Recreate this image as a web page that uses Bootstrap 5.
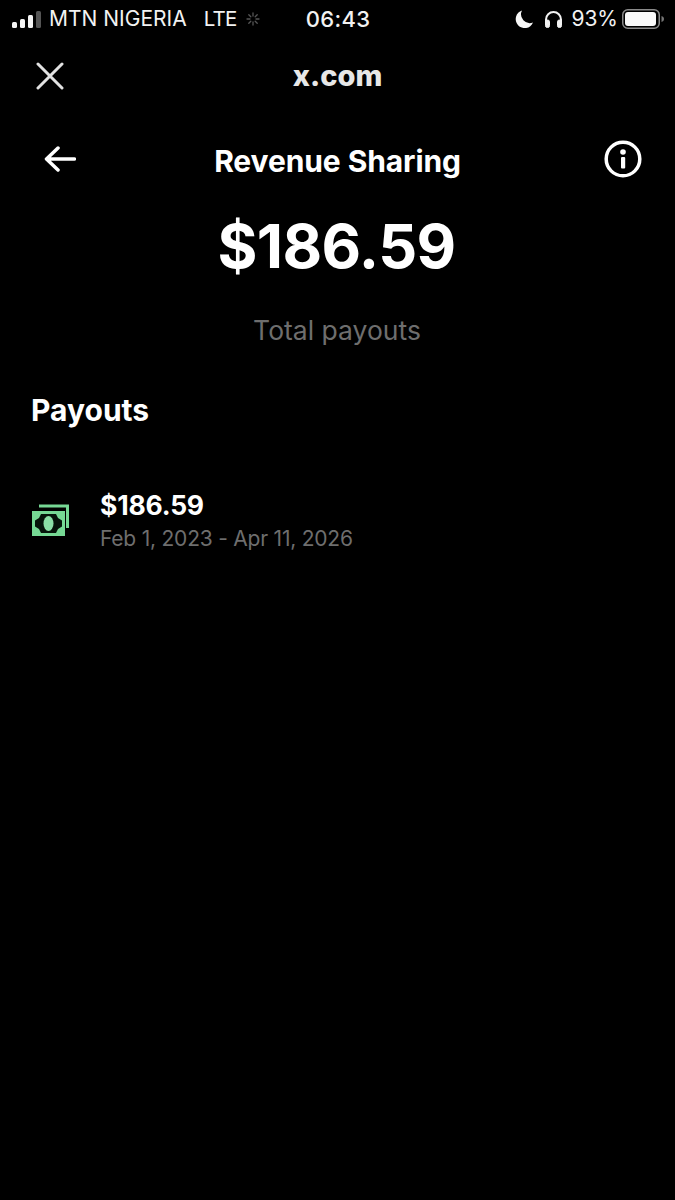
<!DOCTYPE html>
<html>
  <head>
    <title>Revenue Sharing</title>
    <link
      rel="stylesheet"
      href="https://cdn.jsdelivr.net/npm/bootstrap@5.3.0/dist/css/bootstrap.min.css"
    />
    <style>
      html, body { background: #000; }
      body { font-family: Inter, "Liberation Sans", sans-serif; color: #fff; height: 1200px; overflow: hidden; }
      .status-bar { height: 38px; padding: 0 11px 0 12px; font-size: 21px; line-height: 38px; color: #f2f2f2; }
      .status-side { flex: 1 1 0; min-width: 0; }
      .status-time { font-size: 22px; font-weight: 500; letter-spacing: .3px; }
      .carrier { margin-left: 8px; white-space: nowrap; }
      .net { margin-left: 17px; margin-right: 10px; font-size: 20.500px; letter-spacing: -.8px; }
      .headset { margin-left: 11px; }
      .app-bar { height: 76px; padding: 0 36px; }
      .app-bar-title { font-size: 29px; font-weight: 800; color: #e7e7e7; }
      .app-bar-spacer { width: 28px; }
      .page-head { height: 72px; margin-top: 9px; padding: 0 33px 0 44px; }
      .page-title { font-size: 30px; font-weight: 700; letter-spacing: -.1px; margin-top: 4px; margin-right: 5px; }
      .total { font-size: 61px; font-weight: 700; line-height: 76px; letter-spacing: -.6px; margin-top: 13px; padding-right: 2px; }
      .total-label { font-size: 26.500px; line-height: 34px; color: #6e6e6e; margin-top: 29px; padding-right: 1px; }
      .section-title { font-size: 30px; font-weight: 700; line-height: 36px; padding-left: 31px; margin-top: 45px; }
      .payout-row { padding-left: 32px; margin-top: 61px; }
      .payout-icon { margin-bottom: 6px; }
      .payout-text { margin-left: 31px; }
      .payout-amount { font-size: 26.500px; font-weight: 700; line-height: 32px; letter-spacing: -.2px; }
      .payout-dates { font-size: 21px; line-height: 35px; color: #6e6e6e; letter-spacing: -.22px; }
      svg { display: block; flex: none; }
    </style>
  </head>

  <body>
    <!-- status bar -->
    <div class="status-bar d-flex align-items-center">
      <div class="status-side d-flex align-items-center">
        <svg width="29" height="17" viewBox="0 0 29 17" fill="#f4f4f4">
          <rect x="0" y="11" width="5" height="6" rx="1.5" />
          <rect x="8" y="8" width="5" height="9" rx="1.5" />
          <rect x="16" y="4" width="5" height="13" rx="1.5" />
          <rect x="24" y="0" width="5" height="17" rx="1.5" fill="#555" />
        </svg>
        <span class="carrier">MTN NIGERIA</span>
        <span class="net">LTE</span>
        <svg width="14" height="14" viewBox="0 0 14 14" stroke="#555" stroke-width="1.3" stroke-linecap="round">
          <path d="M7 1v3M7 10v3M1 7h3M10 7h3M2.8 2.8l2 2M9.2 9.2l2 2M2.8 11.2l2-2M9.2 4.800l2-2" />
        </svg>
      </div>
      <div class="status-time">06:43</div>
      <div class="status-side d-flex align-items-center justify-content-end">
        <svg width="18" height="18" viewBox="0 0 18 18" fill="#f6f6f6">
          <path d="M7 .5A8.800 8.800 0 0 0 18 12.600 9 9 0 1 1 7 .5Z" />
        </svg>
        <svg class="headset" width="19" height="18" viewBox="0 0 19 18" fill="none" stroke="#f2f2f2" stroke-width="2">
          <path d="M2 14V9.500a7.500 7.500 0 0 1 15 0V14" />
          <rect x="1.500" y="10" width="4" height="7.500" rx="1.800" fill="#f2f2f2" stroke-width="1" />
          <rect x="13.500" y="10" width="4" height="7.500" rx="1.800" fill="#f2f2f2" stroke-width="1" />
        </svg>
        <span class="ms-2">93%</span>
        <svg class="ms-1" width="42" height="20" viewBox="0 0 42 20">
          <rect x=".75" y=".75" width="36.500" height="18.500" rx="5" fill="none" stroke="#8a8a8a" stroke-width="1.500" />
          <rect x="3" y="3" width="31" height="14" rx="3" fill="#fafafa" />
          <path d="M39.500 7c1.500.3 2.500 1.500 2.500 3s-1 2.700-2.500 3Z" fill="#777" />
        </svg>
      </div>
    </div>

    <!-- in-app browser bar -->
    <div class="app-bar d-flex align-items-center justify-content-between">
      <svg width="28" height="28" viewBox="0 0 28 28" stroke="#e2e2e2" stroke-width="3" stroke-linecap="round">
        <path d="M2 2l24 24M26 2L2 26" />
      </svg>
      <div class="app-bar-title">x.com</div>
      <div class="app-bar-spacer"></div>
    </div>

    <div class="page-head d-flex align-items-center justify-content-between">
      <svg width="32" height="26" viewBox="0 0 32 26" fill="none" stroke="#fff" stroke-width="3.500" stroke-linecap="round" stroke-linejoin="round">
        <path d="M30.500 13H3M14 2L2.500 13 14 24" />
      </svg>
      <div class="page-title">Revenue Sharing</div>
      <svg width="38" height="38" viewBox="0 0 38 38">
        <circle cx="19" cy="19" r="16.800" fill="none" stroke="#fff" stroke-width="3.500" />
        <circle cx="19" cy="12" r="2.800" fill="#fff" />
        <rect x="17" y="17" width="4.200" height="11.500" rx="1" fill="#fff" />
      </svg>
    </div>

    <div class="text-center">
      <div class="total">$186.59</div>
      <div class="total-label">Total payouts</div>
    </div>

    <div class="section-title">Payouts</div>

    <div class="payout-row d-flex align-items-center">
      <svg class="payout-icon" width="37" height="32" viewBox="0 0 37 32">
        <path d="M7 2h28.500v22" fill="none" stroke="#76d894" stroke-width="3" />
        <rect x="0" y="7" width="33" height="25" fill="#76d894" />
        <path d="M9 10h15l2 4 4 2.500v6L26 25l-2 4H9l-2-4-4-2.500v-6L7 14Z" fill="#06140a" />
        <ellipse cx="16.500" cy="19.500" rx="5" ry="7.500" fill="#8be0a6" />
      </svg>
      <div class="payout-text">
        <div class="payout-amount">$186.59</div>
        <div class="payout-dates">Feb 1, 2023 - Apr 11, 2026</div>
      </div>
    </div>

    <script src="https://cdn.jsdelivr.net/npm/bootstrap@5.3.0/dist/js/bootstrap.bundle.min.js"></script>
  </body>
</html>
